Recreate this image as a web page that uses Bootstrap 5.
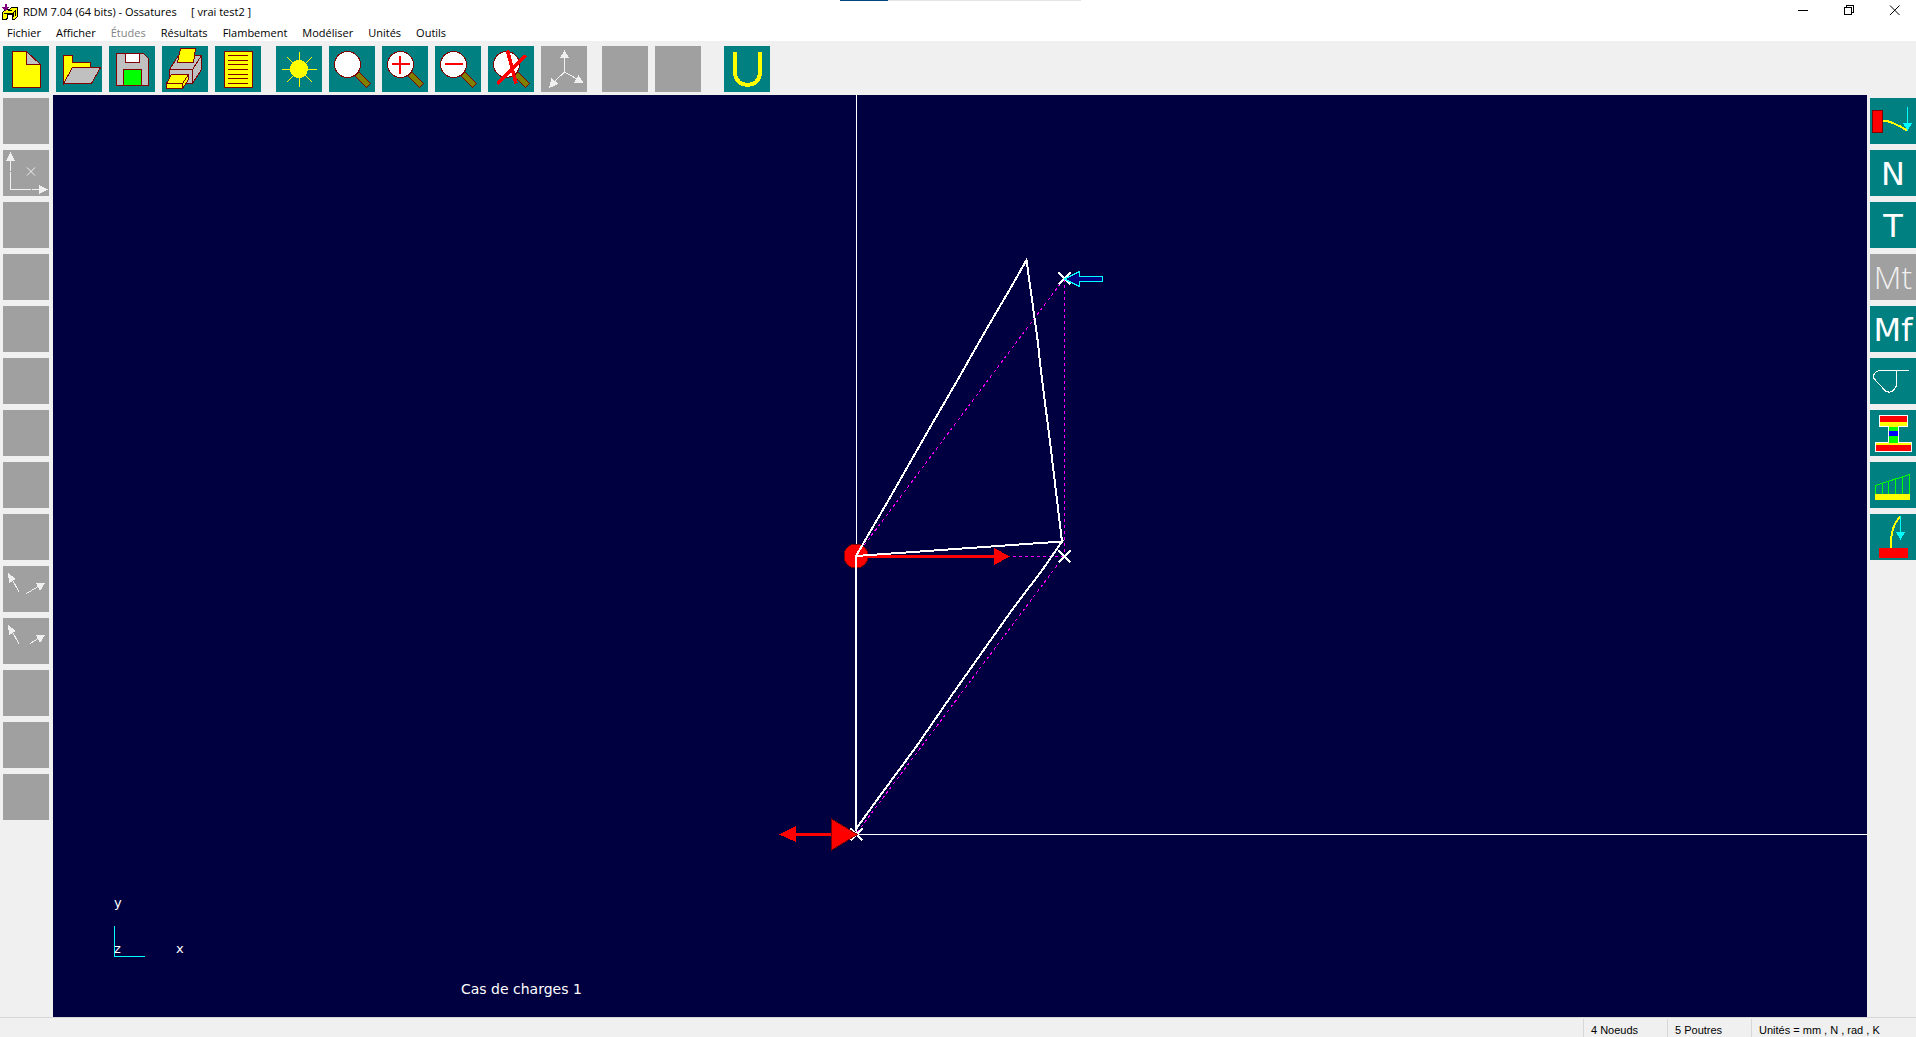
<!DOCTYPE html>
<html lang="fr">
<head>
<meta charset="utf-8">
<meta name="viewport" content="width=device-width, initial-scale=1">
<title>RDM 7.04 (64 bits) - Ossatures [ vrai test2 ]</title>
<link rel="stylesheet" href="https://cdn.jsdelivr.net/npm/bootstrap@5.3.0/dist/css/bootstrap.min.css">
<style>
  body { font-family: "Open Sans", "Noto Sans", sans-serif; font-size: 11px; line-height: 16px; color: #000; background: #f0f0f0; }
  svg { display: block; }
  .title-bar { height: 24px; padding-left: 1px; }
  .title-bar h1 { font-size: 11px; line-height: 16px; white-space: pre; }
  .win-btn { width: 46px; height: 24px; }
  .progress-strip { left: 840px; width: 241px; height: 1px; background: #e5e5e5; }
  .progress-strip span { display: block; width: 48px; height: 1px; background: #004881; }
  .menu-strip { height: 17px; gap: 1px; }
  .menu-strip .nav-link { color: #000; padding: 1px 7px 0; font-size: 11px; line-height: 16px; }
  .menu-strip .nav-link.disabled { color: #838383; }
  .tool-strip { padding: 5px 3px 3px; gap: 7px; }
  .side-strip { padding: 3px; gap: 6px; }
  .side-left { width: 53px; }
  .side-right { width: 49px; padding-right: 0; }
  .tool { width: 46px; height: 46px; padding: 0; border: 0; background: #008080; color: #fff; flex: none;
          font: 32px/48px "DejaVu Sans", sans-serif; text-align: center; overflow: hidden; white-space: nowrap; }
  .tool:disabled { background: #a0a0a0; color: #f0f0f0; }
  .tool svg { width: 46px; height: 46px; shape-rendering: crispEdges; }
  .tool-thin { font-family: "Open Sans", sans-serif; font-weight: 300; line-height: 44px; }
  .work-area { min-height: 0; }
  .view { background: #000040; min-width: 0; }
  .view svg { width: 100%; height: 100%; }
  .view text { font: 13px "DejaVu Sans", sans-serif; fill: #fff; }
  .view .caption-text { font-size: 14px; }
  .status-strip { border-top: 1px solid #d7d7d7; height: 20px; padding-top: 1px; }
  .status-strip div { border-left: 1px solid #d7d7d7; padding: 3px 0 0 7px; width: 84px; font: 11px/16px "Liberation Sans", sans-serif; white-space: nowrap; }
  .status-strip .units { width: 165px; }
</style>
<script src="https://cdn.jsdelivr.net/npm/bootstrap@5.3.0/dist/js/bootstrap.bundle.min.js"></script>
</head>
<body class="d-flex flex-column vh-100 overflow-hidden">

<svg class="d-none">
  <symbol id="lens" viewBox="0 0 46 46">
    <path d="M30 26L41.500 37.500L37.500 41.500L26 30Z" fill="#808000" stroke="#800000"/>
    <circle cx="18.500" cy="18.500" r="13" fill="#fff" stroke="#800000"/>
  </symbol>
</svg>

<header class="bg-white position-relative">
  <div class="progress-strip position-absolute top-0"><span></span></div>
  <div class="title-bar d-flex align-items-center">
    <svg width="18" height="18" viewBox="0 0 18 18" class="flex-shrink-0" shape-rendering="crispEdges" aria-hidden="true">
      <path d="M1.500 9.500L4.500 6.500L8.500 6.500L10.500 4.500H16.500V13.500L13.500 16.500H11.500V11.500H6.500V14.500L5.500 16.500H1.500Z" fill="#ff0" stroke="#000"/>
      <path d="M3 10H12M12 10L15 7M12 10V14M7 7H11M14 7V13" stroke="#000" fill="none"/>
      <path d="M4.500 1V7" stroke="#800080" stroke-width="2"/><path d="M1 4H8L4.500 8Z" fill="#800080"/>
    </svg>
    <h1 class="m-0 ps-1 fw-normal flex-grow-1">RDM 7.04 (64 bits) - Ossatures     [ vrai test2 ]</h1>
    <button class="win-btn btn p-0 border-0 rounded-0" aria-label="Réduire"><svg width="46" height="22"><path d="M20 9.500H30" stroke="#000"/></svg></button>
    <button class="win-btn btn p-0 border-0 rounded-0" aria-label="Restaurer"><svg width="46" height="22" shape-rendering="crispEdges"><path d="M20.500 6.500H27.500V13.500H20.500ZM22.500 6.500V4.500H29.500V11.500H27.500" fill="none" stroke="#000"/></svg></button>
    <button class="win-btn btn p-0 border-0 rounded-0" aria-label="Fermer"><svg width="46" height="22"><path d="M20 4.500L29.500 14M29.500 4.500L20 14" stroke="#000"/></svg></button>
  </div>
  <nav class="menu-strip nav flex-nowrap align-items-center" aria-label="Menu principal">
    <a class="nav-link" href="#">Fichier</a>
    <a class="nav-link" href="#">Afficher</a>
    <a class="nav-link disabled" href="#" aria-disabled="true">Études</a>
    <a class="nav-link" href="#">Résultats</a>
    <a class="nav-link" href="#">Flambement</a>
    <a class="nav-link" href="#">Modéliser</a>
    <a class="nav-link" href="#">Unités</a>
    <a class="nav-link" href="#">Outils</a>
  </nav>
</header>

<div class="tool-strip d-flex" role="toolbar" aria-label="Outils">
  <button class="tool" aria-label="Nouveau"><svg><g stroke="#800000"><path d="M9.500 5.500H23.500V18.500H37.500V41.500H9.500Z" fill="#ff0"/><path d="M23.500 5.500L37.500 18.500H23.500Z" fill="#c0c0c0"/></g></svg></button>
  <button class="tool" aria-label="Ouvrir"><svg><g stroke="#800000"><path d="M7.500 37.500V9.500H16.500V16.500H34.500V21.500H16.500Z" fill="#ff0"/><path d="M16.500 21.500H44.500L35.500 37.500H7.500Z" fill="#c0c0c0"/></g></svg></button>
  <button class="tool" aria-label="Enregistrer"><svg><g stroke="#800000"><path d="M7.500 7.500H34.500L39.500 12.500V39.500H7.500Z" fill="#c0c0c0"/><path d="M16.500 7.500H30.500V16.500H16.500Z" fill="#fff"/><path d="M14.500 23.500H32.500V39.500H14.500Z" fill="#0f0"/></g></svg></button>
  <button class="tool" aria-label="Imprimer"><svg><g stroke="#800000"><path d="M7.500 23.500L16.500 9.500H39.500V23.500L30.500 37.500H7.500Z" fill="#c0c0c0"/><path d="M7.500 23.500H30.500V37.500M30.500 23.500L39.500 9.500" fill="none"/><path d="M18.500 2.500H33.500L31.500 16.500H15.500Z" fill="#ff0"/><path d="M9.500 28.500H26.500V33.500L20.500 42.500H4.500V37.500Z" fill="#ff0"/><path d="M4.500 37.500H20.500V42.500M20.500 37.500L26.500 28.500" fill="none"/></g></svg></button>
  <button class="tool me-2" aria-label="Notes de calcul"><svg><g stroke="#800000"><path d="M9.500 5.500H37.500V41.500H9.500Z" fill="#ff0"/><path d="M13 9.500H33M13 14.500H33M13 18.500H33M13 23.500H33M13 28.500H33M13 32.500H33M13 37.500H33"/></g></svg></button>
  <button class="tool" aria-label="Redessiner"><svg><path d="M23.500 6V41M6 23.500H41M11 11L36 36M36 11L11 36" stroke="#ff0"/><circle cx="23" cy="23" r="9" fill="#ff0"/></svg></button>
  <button class="tool" aria-label="Loupe"><svg><use href="#lens"/></svg></button>
  <button class="tool" aria-label="Zoom avant"><svg><use href="#lens"/><path d="M18 10V28M10 18H28" stroke="red" stroke-width="2"/></svg></button>
  <button class="tool" aria-label="Zoom arrière"><svg><use href="#lens"/><path d="M10 18H28" stroke="red" stroke-width="2"/></svg></button>
  <button class="tool" aria-label="Annuler le zoom"><svg><use href="#lens"/><path d="M19.500 4.500L28 37.500M38 9.500L9.500 37.500" stroke="red" stroke-width="3.500"/></svg></button>
  <button class="tool me-2" disabled aria-label="Vue 3D"><svg fill="#f0f0f0"><path d="M23.500 10V26M23.500 26L36 33M23.500 26L13 36" stroke="#f0f0f0"/><path d="M23.500 4L28 12H19ZM42.500 37L37.500 29L33 36.500ZM8 42L10.500 32L17.500 38Z"/></svg></button>
  <button class="tool" disabled aria-label="Outil inactif"></button>
  <button class="tool me-3" disabled aria-label="Outil inactif"></button>
  <button class="tool" aria-label="Unités"><svg><path d="M11 6V26Q11 32 15 36Q19 39 23.500 39Q28 39 32 36Q36 32 36 26V6" fill="none" stroke="#ff0" stroke-width="4"/></svg></button>
</div>

<main class="work-area d-flex flex-grow-1">
  <div class="side-strip side-left d-flex flex-column flex-shrink-0" role="toolbar" aria-label="Affichage">
    <button class="tool" disabled aria-label="Outil inactif"></button>
    <button class="tool" disabled aria-label="Repère"><svg fill="#f0f0f0"><path d="M7.500 10V21M7.500 22V39.500H28M29 39.500H38" stroke="#f0f0f0" fill="none"/><path d="M24 17.500L32 25.500M32 17.500L24 25.500" stroke="#f0f0f0" shape-rendering="auto"/><path d="M7.500 2L12 11H3ZM45 39.500L36 44V35Z"/></svg></button>
    <button class="tool" disabled aria-label="Outil inactif"></button>
    <button class="tool" disabled aria-label="Outil inactif"></button>
    <button class="tool" disabled aria-label="Outil inactif"></button>
    <button class="tool" disabled aria-label="Outil inactif"></button>
    <button class="tool" disabled aria-label="Outil inactif"></button>
    <button class="tool" disabled aria-label="Outil inactif"></button>
    <button class="tool" disabled aria-label="Outil inactif"></button>
    <button class="tool" disabled aria-label="Actions de liaison"><svg fill="#f0f0f0"><path d="M9 13L16 26M36 20L23.500 27.500" stroke="#f0f0f0"/><path d="M5 7L13 13L6 17ZM42 17L33 17L37 25Z"/></svg></button>
    <button class="tool" disabled aria-label="Efforts nodaux"><svg fill="#f0f0f0"><path d="M9 13L16 26M36 20L27 25.500" stroke="#f0f0f0"/><path d="M5 7L13 13L6 17ZM42 17L33 17L37 25Z"/></svg></button>
    <button class="tool" disabled aria-label="Outil inactif"></button>
    <button class="tool" disabled aria-label="Outil inactif"></button>
    <button class="tool" disabled aria-label="Outil inactif"></button>
  </div>

  <section class="view flex-grow-1" aria-label="Déformée de l'ossature">
    <svg>
      <g transform="translate(-53 -95)" fill="none" shape-rendering="crispEdges">
        <path d="M856.500 95V834.500" stroke="#fff"/>
        <line x1="856" y1="834.500" x2="110%" y2="834.500" stroke="#fff"/>
        <g stroke="#f0f" stroke-dasharray="3 3">
          <path d="M1064.500 279V556"/><path d="M1064 556.500H856"/><path d="M1064 279L856 556"/><path d="M1064 556L856 834"/>
        </g>
        <path d="M1058.500 272.500L1070.500 284.500M1070.500 272.500L1058.500 284.500M1058.500 550.500L1070.500 562.500M1070.500 550.500L1058.500 562.500M850.500 828.500L862.500 840.500M862.500 828.500L850.500 840.500" stroke="#fff" stroke-width="2"/>
        <circle cx="856" cy="556" r="12" fill="red" stroke="#800000"/>
        <path d="M856 556.500H996M794 834.500H834" stroke="red" stroke-width="3"/>
        <path d="M1010 556.500L994 565V548ZM779 834.500L796 826V842Z" fill="red"/>
        <path d="M857.500 834.500L831.500 850V819Z" fill="red" stroke="#800000"/>
        <path d="M856 556V829L882 793L916 747L947 702L978 658L1012 610L1043 569L1062 541.500L856 556L888 501L928 431L957 381L986 330L1010 289L1026.500 260L1038 343L1040 363L1051 450L1062 541.500" stroke="#fff" stroke-width="2"/>
        <path d="M1064.500 279L1079.500 271.500V276.500H1102.500V281.500H1079.500V286.500Z" fill="#000080" stroke="#0ff"/>
        <path d="M114.500 926V956.500H145" stroke="#0ff"/>
      </g>
      <g transform="translate(-53 -95)">
        <text x="114" y="907">y</text><text x="114" y="953">z</text><text x="176" y="953">x</text>
        <text class="caption-text" x="461" y="994">Cas de charges 1</text>
      </g>
    </svg>
  </section>

  <div class="side-strip side-right d-flex flex-column flex-shrink-0" role="toolbar" aria-label="Résultats">
    <button class="tool" aria-label="Déformée"><svg><path d="M2.500 12.500H12.500V34.500H2.500Z" fill="red" stroke="#800000"/><path d="M13 22.500C22 23 30 28 37 32.500" fill="none" stroke="#ff0" stroke-width="2"/><path d="M37.500 9V25" stroke="#0ff"/><path d="M33 25H42L37.500 33Z" fill="#0ff"/></svg></button>
    <button class="tool">N</button>
    <button class="tool">T</button>
    <button class="tool tool-thin" disabled>Mt</button>
    <button class="tool">Mf</button>
    <button class="tool" aria-label="Contraintes"><svg><path d="M39 12.500H9.500Q3 14 3.500 20L15.500 33Q19 35 22 33.500Q26.500 30 26.500 26V12.500" fill="none" stroke="#fff"/></svg></button>
    <button class="tool" aria-label="Contraintes dans une section"><svg><path d="M9.500 5.500H37.500V16.500H28.500V32.500H41.500V41.500H5.500V32.500H18.500V16.500H9.500Z" fill="#ff0" stroke="#fff"/><path d="M10 6H37V12H10ZM6 35H41V41H6Z" fill="red"/><path d="M19 17H28V33H19Z" fill="#0f0"/><path d="M19 21H28V26H19Z" fill="#00f"/></svg></button>
    <button class="tool" aria-label="Diagramme le long d'une poutre"><svg><path d="M5 32H40V38H5Z" fill="#ff0"/><path d="M5.500 32V23.500L39.500 12.500V32M12.500 32V21.500M18.500 32V19.500M25.500 32V17.500M32.500 32V15" fill="none" stroke="#0f0"/></svg></button>
    <button class="tool" aria-label="Flambement"><svg><path d="M9 34H38V44H9Z" fill="red"/><path d="M21 34V26Q22 16 25 10Q27 6 30 3" fill="none" stroke="#ff0" stroke-width="2"/><path d="M30.500 2V20" stroke="#0ff"/><path d="M26 18H35L30.500 26Z" fill="#0ff"/></svg></button>
  </div>
</main>

<footer class="status-strip d-flex justify-content-end">
  <div>4 Noeuds</div>
  <div>5 Poutres</div>
  <div class="units">Unités = mm , N , rad , K</div>
</footer>
</body>
</html>
